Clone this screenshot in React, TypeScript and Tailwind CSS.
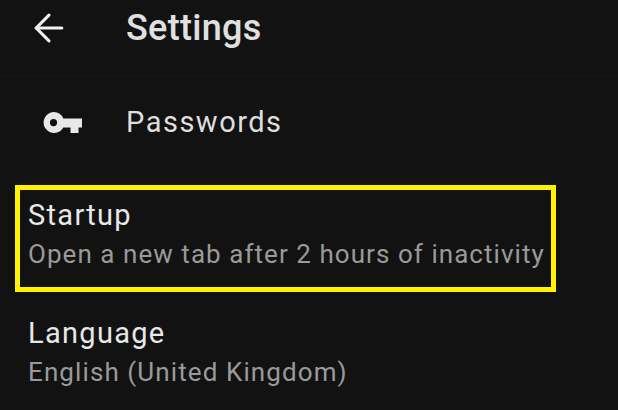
import { ArrowLeft } from "lucide-react";

function Key() {
  return (
    <svg width="39" height="21" viewBox="0 0 39 21" className="block">
      <path fill="#e8e8e8" fillRule="evenodd" d="M10.500 0a10.500 10.500 0 0 1 9.800 6.500H39v9h-3.500V21h-8v-5.500h-7.200A10.500 10.500 0 1 1 10.500 0zM10.500 7a3.600 3.600 0 1 0 0 7.200 3.600 3.600 0 0 0 0-7.200z" />
    </svg>
  );
}

export default function App() {
  return (
    <div className="w-[618px] h-[410px] overflow-hidden bg-[#121212] text-[#e6e6e6] font-['Roboto',sans-serif] flex flex-col">
      <header className="h-[77px] shrink-0 flex items-center border-b border-[#181818] pb-[20px]">
        <div className="w-[126px] pl-[27px]">
          <ArrowLeft size={44} strokeWidth={1.7} className="text-[#f0f0f0]" />
        </div>
        <div className="text-[36px] font-medium tracking-[0.3px] text-[#e0e0e0]">Settings</div>
      </header>
      <div className="h-[91px] shrink-0 flex items-center">
        <div className="w-[126px] pl-[43px]"><Key /></div>
        <div className="text-[29px] tracking-[1.5px] text-[#dedede]">Passwords</div>
      </div>
      <div className="ml-[15px] mt-[17px] w-[541px] h-[107px] shrink-0 border-[5px] border-[#fff200] pl-[8px] flex flex-col justify-center">
        <div className="text-[29px] leading-[39px] tracking-[1.3px] text-[#e8e8e8] -mt-[7px]">Startup</div>
        <div className="text-[26px] leading-[39px] tracking-[1.05px] text-[#9a9a9a] whitespace-nowrap">Open a new tab after 2 hours of inactivity</div>
      </div>
      <div className="pl-[28px] pt-[22px]">
        <div className="text-[29px] leading-[38px] tracking-[1.3px] text-[#e8e8e8]">Language</div>
        <div className="text-[26px] leading-[40px] tracking-[1.1px] text-[#9a9a9a] whitespace-nowrap">English (United Kingdom)</div>
      </div>
    </div>
  );
}
